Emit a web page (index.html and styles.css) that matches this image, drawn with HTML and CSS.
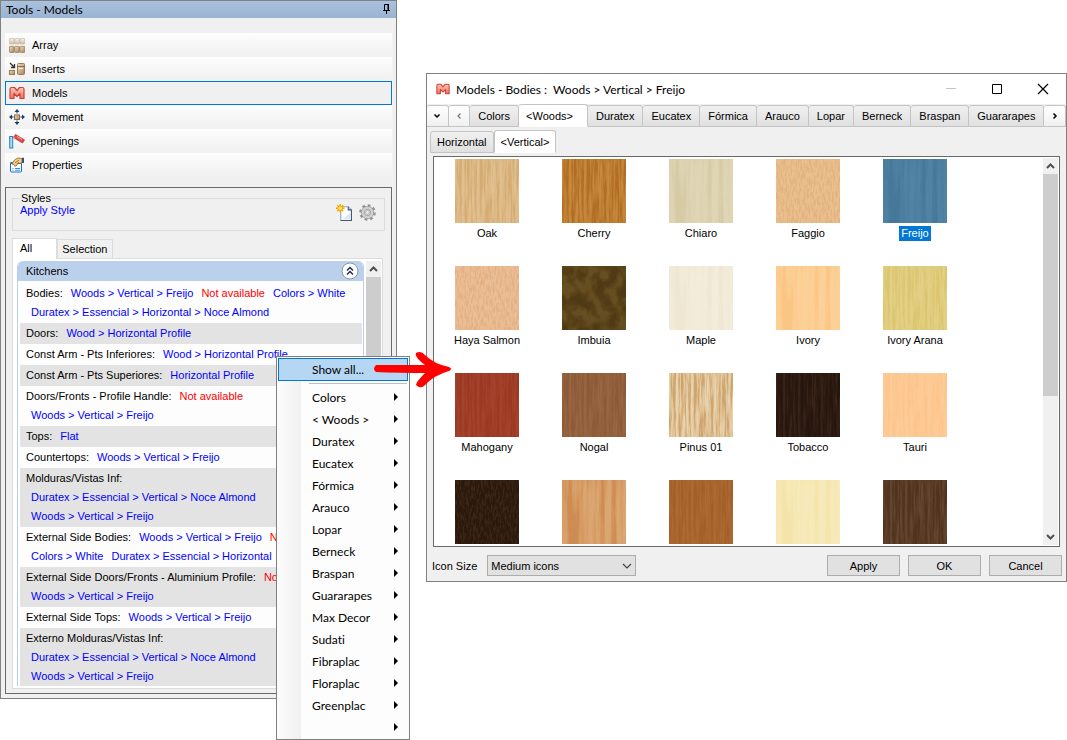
FILE: index.html
```html
<!DOCTYPE html>
<html lang="en">
<head>
    <meta charset="UTF-8">
    <meta name="viewport" content="width=device-width, initial-scale=1.0">
    <title>Tools - Models</title>
    <link rel="stylesheet" href="styles.css">
</head>
<body>
    <!-- Shared wood grain filters and icon symbols -->
    <svg class="defs" width="0" height="0" aria-hidden="true">
        <defs>
            <filter id="grain-fine" x="0" y="0" width="100%" height="100%" color-interpolation-filters="sRGB">
                <feTurbulence type="fractalNoise" baseFrequency="0.4 0.025" numOctaves="4" seed="4"/>
                <feColorMatrix values="3 0 0 0 -1  3 0 0 0 -1  3 0 0 0 -1  0 0 0 0 1"/>
            </filter>
            <filter id="grain-wide" x="0" y="0" width="100%" height="100%" color-interpolation-filters="sRGB">
                <feTurbulence type="fractalNoise" baseFrequency="0.18 0.01" numOctaves="5" seed="23"/>
                <feColorMatrix values="3 0 0 0 -1  3 0 0 0 -1  3 0 0 0 -1  0 0 0 0 1"/>
            </filter>
            <filter id="grain-speck" x="0" y="0" width="100%" height="100%" color-interpolation-filters="sRGB">
                <feTurbulence type="fractalNoise" baseFrequency="0.6 0.15" numOctaves="3" seed="7"/>
                <feColorMatrix values="3 0 0 0 -1  3 0 0 0 -1  3 0 0 0 -1  0 0 0 0 1"/>
            </filter>
            <filter id="grain-cloud" x="0" y="0" width="100%" height="100%" color-interpolation-filters="sRGB">
                <feTurbulence type="fractalNoise" baseFrequency="0.09 0.07" numOctaves="5" seed="2"/>
                <feColorMatrix values="3 0 0 0 -1  3 0 0 0 -1  3 0 0 0 -1  0 0 0 0 1"/>
            </filter>
            <linearGradient id="tan" x1="0" y1="0" x2="1" y2="1">
                <stop offset="0" stop-color="#f2e2c8"/>
                <stop offset="1" stop-color="#a98355"/>
            </linearGradient>
            <linearGradient id="red" x1="0" y1="0" x2="0" y2="1">
                <stop offset="0" stop-color="#ffc9b8"/>
                <stop offset="1" stop-color="#f0705f"/>
            </linearGradient>
            <linearGradient id="cream" x1="0" y1="0" x2="0" y2="1">
                <stop offset="0" stop-color="#faf3e8"/>
                <stop offset="1" stop-color="#c5b294"/>
            </linearGradient>
        </defs>
        <symbol id="logo-m" viewBox="0 0 16 16">
            <path d="M1 13.500V4Q1 2.500 2.500 2.500H5.500L8 5.500 10.500 2.500H13.500Q15 2.500 15 4V13.500H11V8.500L8 11.500 5 8.500V13.500Z" fill="url(#red)" stroke="#cb4038" stroke-width="1.200" stroke-linejoin="round"/>
        </symbol>
        <symbol id="chev-up" viewBox="0 0 15 16">
            <path d="M4 10L7.500 6.500 11 10" fill="none" stroke="#505050" stroke-width="2"/>
        </symbol>
        <symbol id="chev-down" viewBox="0 0 15 16">
            <path d="M4 6L7.500 9.500 11 6" fill="none" stroke="#505050" stroke-width="2"/>
        </symbol>
    </svg>

    <div class="desktop">
        <!-- Tools panel -->
        <section class="tools-window">
            <header class="tools-title">
                <h1>Tools - Models</h1>
                <button class="pin" aria-label="Pin">
                    <svg width="8" height="11" viewBox="0 0 8 11"><path d="M1.500 6V.5H5.500V6M0 6.500H7M3.500 7V10" fill="none" stroke="#000"/><path d="M4.500 0H6V6H4.500Z"/></svg>
                </button>
            </header>

            <nav class="tool-list">
                <a href="#array" class="tool">
                    <svg viewBox="0 0 16 16"><g fill="url(#cream)" stroke="#b8a487" stroke-width=".7" opacity=".8"><rect x=".4" y="1.400" width="4.700" height="5.600" rx=".6"/><rect x="5.700" y="1.400" width="4.700" height="5.600" rx=".6"/><rect x="11" y="1.400" width="4.700" height="5.600" rx=".6"/></g><g fill="url(#tan)" stroke="#8d7350" stroke-width=".7"><rect x=".4" y="9.400" width="4.700" height="6" rx=".6"/><rect x="5.700" y="9.400" width="4.700" height="6" rx=".6"/><rect x="11" y="9.400" width="4.700" height="6" rx=".6"/></g></svg>
                    Array
                </a>
                <a href="#inserts" class="tool">
                    <svg viewBox="0 0 16 16"><path d="M1 2L5 6M5.500 3V6.500H2" fill="none" stroke="#333" stroke-width="1.300"/><rect x=".5" y="9.500" width="5" height="4" fill="url(#tan)" stroke="#9b7b50"/><rect x="8.500" y="2.500" width="7" height="11" rx="1" fill="url(#tan)" stroke="#9b7b50"/><path d="M8.500 5.500H15.500" stroke="#8c6b42"/><path d="M10 7.500H14" stroke="#fff"/></svg>
                    Inserts
                </a>
                <a href="#models" class="tool selected">
                    <svg viewBox="0 0 16 16"><use href="#logo-m"/></svg>
                    Models
                </a>
                <a href="#movement" class="tool">
                    <svg viewBox="0 0 16 16"><g fill="#173f72"><path d="M8 0L10.500 3H8.500V4.500H7.500V3H5.500ZM8 16L10.500 13H8.500V11.500H7.500V13H5.500ZM0 8L3 5.500V7.500H4.500V8.500H3V10.500ZM16 8L13 5.500V7.500H11.500V8.500H13V10.500Z"/></g><rect x="5.500" y="6" width="5" height="4.500" fill="url(#tan)" stroke="#8c6b42"/></svg>
                    Movement
                </a>
                <a href="#openings" class="tool">
                    <svg viewBox="0 0 16 16"><rect x=".7" y="3.500" width="3" height="11.500" fill="#a8dcf7" stroke="#2484b8"/><path d="M6.500 1.500L15.500 7 13.500 10 4.500 4.500Z" fill="#e8494a" stroke="#b01f28" stroke-width=".7"/><path d="M5.500 4L4 7M8 3.500L13 6.500" fill="none" stroke="#ffb0a8"/></svg>
                    Openings
                </a>
                <a href="#properties" class="tool">
                    <svg viewBox="0 0 16 16"><rect x="1.500" y="5.500" width="11" height="9.500" rx="1" fill="#fff" stroke="#1671ce"/><path d="M1.500 6H12.500" stroke="#1671ce" stroke-width="2"/><path d="M3.500 11.500H4.500M6 11.500H11M3.500 13.200H4.500M6 13.200H11" stroke="#3b8be0"/><path d="M3 7Q5 2 9 1L13 1.500V6L9 6.500 7 9Q5 10 5 7.500Z" fill="#f4cf8b" stroke="#8d6526" stroke-width=".8"/><path d="M6 6L10 3M7.500 7.500L10 5" stroke="#a77732"/><path d="M13 .8H15V6H13Z" fill="#35507e"/></svg>
                    Properties
                </a>
            </nav>

            <div class="panel">
                <fieldset class="styles-group">
                    <legend>Styles</legend>
                    <a href="#apply-style">Apply Style</a>
                    <div class="group-actions">
                        <button aria-label="New style">
                            <svg viewBox="0 0 16 16"><path d="M4.500 2.500H11.500L14.500 5.500V15.500H4.500Z" fill="#fff" stroke="#8fa3bd"/><path d="M11.500 2.500V5.500H14.500M14.500 5.500V15.500H4.500" fill="none" stroke="#3f5678"/><path d="M6 14.500H13.500V8Z" fill="#dce8f6"/><path d="M4 0V8M0 4H8M1.200 1.200L6.800 6.800M6.800 1.200L1.200 6.800" stroke="#f6a800" stroke-width="1.300"/><circle cx="4" cy="4" r="2.200" fill="#ffe94a" stroke="#f39a00" stroke-width=".8"/></svg>
                        </button>
                        <button aria-label="Style settings">
                            <svg viewBox="0 0 16 16"><circle cx="8" cy="8" r="6.600" fill="none" stroke="#939393" stroke-width="2.400" stroke-dasharray="2.600 2.584"/><circle cx="8" cy="8" r="4.300" fill="none" stroke="#8c8c8c" stroke-width="3.600"/><circle cx="8" cy="8" r="4.300" fill="none" stroke="#d0d0d0" stroke-width="2.600"/><circle cx="8" cy="8" r="1.800" fill="#f0f0f0" stroke="#999" stroke-width=".7"/></svg>
                        </button>
                    </div>
                </fieldset>

                <div class="style-tabs" role="tablist">
                    <button class="style-tab active" role="tab">All</button>
                    <button class="style-tab" role="tab">Selection</button>
                </div>

                <div class="style-page">
                    <div class="group">
                        <div class="group-header">
                            <h2>Kitchens</h2>
                            <button aria-label="Collapse Kitchens">
                                <svg viewBox="0 0 18 18"><circle cx="9" cy="9" r="8" fill="#fff" stroke="#8798b0"/><path d="M6 8.500L9 5.500 12 8.500M6 12.500L9 9.500 12 12.500" fill="none" stroke="#1d2c55" stroke-width="1.500"/></svg>
                            </button>
                        </div>
                        <ul class="rows">
                            <li><span>Bodies:</span><a href="#">Woods &gt; Vertical &gt; Freijo</a><a href="#" class="missing">Not available</a><a href="#">Colors &gt; White</a><a href="#">Duratex &gt; Essencial &gt; Horizontal &gt; Noce Almond</a></li>
                            <li><span>Doors:</span><a href="#">Wood &gt; Horizontal Profile</a></li>
                            <li><span>Const Arm - Pts Inferiores:</span><a href="#">Wood &gt; Horizontal Profile</a></li>
                            <li><span>Const Arm - Pts Superiores:</span><a href="#">Horizontal Profile</a></li>
                            <li><span>Doors/Fronts - Profile Handle:</span><a href="#" class="missing">Not available</a><a href="#">Woods &gt; Vertical &gt; Freijo</a></li>
                            <li><span>Tops:</span><a href="#">Flat</a></li>
                            <li><span>Countertops:</span><a href="#">Woods &gt; Vertical &gt; Freijo</a></li>
                            <li><span>Molduras/Vistas Inf:</span><a href="#">Duratex &gt; Essencial &gt; Vertical &gt; Noce Almond</a><a href="#">Woods &gt; Vertical &gt; Freijo</a></li>
                            <li><span>External Side Bodies:</span><a href="#">Woods &gt; Vertical &gt; Freijo</a><a href="#" class="missing">Not available</a><a href="#">Colors &gt; White</a><a href="#">Duratex &gt; Essencial &gt; Horizontal</a></li>
                            <li><span>External Side Doors/Fronts - Aluminium Profile:</span><a href="#" class="missing">Not available</a><a href="#">Woods &gt; Vertical &gt; Freijo</a></li>
                            <li><span>External Side Tops:</span><a href="#">Woods &gt; Vertical &gt; Freijo</a></li>
                            <li><span>Externo Molduras/Vistas Inf:</span><a href="#">Duratex &gt; Essencial &gt; Vertical &gt; Noce Almond</a><a href="#">Woods &gt; Vertical &gt; Freijo</a></li>
                        </ul>
                    </div>
                    <div class="scrollbar">
                        <button aria-label="Scroll up"><svg viewBox="0 0 15 16"><use href="#chev-up"/></svg></button>
                        <div class="thumb"></div>
                        <button aria-label="Scroll down"><svg viewBox="0 0 15 16"><use href="#chev-down"/></svg></button>
                    </div>
                </div>
            </div>
        </section>

        <!-- Models dialog -->
        <section class="dialog">
            <header class="dialog-title">
                <svg class="dialog-logo" viewBox="0 0 16 16"><use href="#logo-m"/></svg>
                <h2>Models - Bodies :&nbsp; Woods &gt; Vertical &gt; Freijo</h2>
                <div class="window-buttons">
                    <button aria-label="Minimize" disabled><svg viewBox="0 0 12 12"><path d="M1 5.500H11" stroke="#c4c4c4"/></svg></button>
                    <button aria-label="Maximize"><svg viewBox="0 0 12 12"><path d="M1.500 1.500H10.500V10.500H1.500Z" fill="none" stroke="#000"/></svg></button>
                    <button aria-label="Close"><svg viewBox="0 0 12 12"><path d="M1 1L11 11M11 1L1 11" stroke="#000" stroke-width="1.200"/></svg></button>
                </div>
            </header>

            <div class="tabs" role="tablist">
                <button class="tab arrow" aria-label="Tab list"><svg viewBox="0 0 8 8"><path d="M1.500 2.500L4 5 6.500 2.500" fill="none" stroke="#000" stroke-width="1.500"/></svg></button>
                <button class="tab arrow" aria-label="Previous tabs"><svg viewBox="0 0 8 8"><path d="M5.500 1.500L3 4 5.500 6.500" fill="none" stroke="#777" stroke-width="1.200"/></svg></button>
                <button class="tab" role="tab">Colors</button>
                <button class="tab active" role="tab">&lt;Woods&gt;</button>
                <button class="tab" role="tab">Duratex</button>
                <button class="tab" role="tab">Eucatex</button>
                <button class="tab" role="tab">Fórmica</button>
                <button class="tab" role="tab">Arauco</button>
                <button class="tab" role="tab">Lopar</button>
                <button class="tab" role="tab">Berneck</button>
                <button class="tab" role="tab">Braspan</button>
                <button class="tab" role="tab">Guararapes</button>
                <button class="tab arrow" aria-label="Next tabs"><svg viewBox="0 0 8 8"><path d="M2.500 1.500L5 4 2.500 6.500" fill="none" stroke="#000" stroke-width="1.500"/></svg></button>
            </div>
            <div class="tabs sub-tabs" role="tablist">
                <button class="tab" role="tab">Horizontal</button>
                <button class="tab active" role="tab">&lt;Vertical&gt;</button>
            </div>

            <div class="browser">
                <ul class="swatches">
                    <li><svg class="swatch oak"><rect width="64" height="64" filter="url(#grain-fine)"/></svg><span>Oak</span></li>
                    <li><svg class="swatch cherry"><rect width="64" height="64" filter="url(#grain-fine)"/></svg><span>Cherry</span></li>
                    <li><svg class="swatch chiaro"><rect width="64" height="64" filter="url(#grain-wide)"/></svg><span>Chiaro</span></li>
                    <li><svg class="swatch faggio"><rect width="64" height="64" filter="url(#grain-speck)"/></svg><span>Faggio</span></li>
                    <li class="selected"><svg class="swatch freijo"><rect width="64" height="64" filter="url(#grain-wide)"/></svg><span>Freijo</span></li>
                    <li><svg class="swatch haya"><rect width="64" height="64" filter="url(#grain-speck)"/></svg><span>Haya Salmon</span></li>
                    <li><svg class="swatch imbuia"><rect width="64" height="64" filter="url(#grain-cloud)"/></svg><span>Imbuia</span></li>
                    <li><svg class="swatch maple"><rect width="64" height="64" filter="url(#grain-wide)"/></svg><span>Maple</span></li>
                    <li><svg class="swatch ivory"><rect width="64" height="64" filter="url(#grain-wide)"/></svg><span>Ivory</span></li>
                    <li><svg class="swatch arana"><rect width="64" height="64" filter="url(#grain-fine)"/></svg><span>Ivory Arana</span></li>
                    <li><svg class="swatch mahogany"><rect width="64" height="64" filter="url(#grain-fine)"/></svg><span>Mahogany</span></li>
                    <li><svg class="swatch nogal"><rect width="64" height="64" filter="url(#grain-fine)"/></svg><span>Nogal</span></li>
                    <li><svg class="swatch pinus"><rect width="64" height="64" filter="url(#grain-fine)"/></svg><span>Pinus 01</span></li>
                    <li><svg class="swatch tobacco"><rect width="64" height="64" filter="url(#grain-fine)"/></svg><span>Tobacco</span></li>
                    <li><svg class="swatch tauri"><rect width="64" height="64" filter="url(#grain-fine)"/></svg><span>Tauri</span></li>
                    <li><svg class="swatch wenge"><rect width="64" height="64" filter="url(#grain-speck)"/></svg></li>
                    <li><svg class="swatch alder"><rect width="64" height="64" filter="url(#grain-wide)"/></svg></li>
                    <li><svg class="swatch teak"><rect width="64" height="64" filter="url(#grain-fine)"/></svg></li>
                    <li><svg class="swatch birch"><rect width="64" height="64" filter="url(#grain-wide)"/></svg></li>
                    <li><svg class="swatch walnut"><rect width="64" height="64" filter="url(#grain-fine)"/></svg></li>
                </ul>
                <div class="scrollbar">
                    <button aria-label="Scroll up"><svg viewBox="0 0 15 16"><use href="#chev-up"/></svg></button>
                    <div class="thumb"></div>
                    <button aria-label="Scroll down"><svg viewBox="0 0 15 16"><use href="#chev-down"/></svg></button>
                </div>
            </div>

            <footer class="dialog-footer">
                <label for="iconSize">Icon Size</label>
                <div class="select-box">
                    <select id="iconSize">
                        <option>Medium icons</option>
                    </select>
                    <svg viewBox="0 0 10 6"><path d="M1 1L5 5 9 1" fill="none" stroke="#444" stroke-width="1.200"/></svg>
                </div>
                <div class="dialog-buttons">
                    <button>Apply</button>
                    <button>OK</button>
                    <button>Cancel</button>
                </div>
            </footer>
        </section>

        <!-- Context menu -->
        <div class="menu" role="menu">
            <button class="highlight" role="menuitem">Show all...</button>
            <hr>
            <button class="more" role="menuitem">Colors</button>
            <button class="more" role="menuitem">&lt; Woods &gt;</button>
            <button class="more" role="menuitem">Duratex</button>
            <button class="more" role="menuitem">Eucatex</button>
            <button class="more" role="menuitem">Fórmica</button>
            <button class="more" role="menuitem">Arauco</button>
            <button class="more" role="menuitem">Lopar</button>
            <button class="more" role="menuitem">Berneck</button>
            <button class="more" role="menuitem">Braspan</button>
            <button class="more" role="menuitem">Guararapes</button>
            <button class="more" role="menuitem">Max Decor</button>
            <button class="more" role="menuitem">Sudati</button>
            <button class="more" role="menuitem">Fibraplac</button>
            <button class="more" role="menuitem">Floraplac</button>
            <button class="more" role="menuitem">Greenplac</button>
            <button class="more" role="menuitem"></button>
        </div>

        <svg class="pointer" viewBox="0 0 80 38" aria-hidden="true">
            <path d="M4 14Q24 14 60 14V22Q24 22 4 21Q0 18 4 14Z" fill="#f00"/>
            <path d="M44 2Q49 -1 53 4Q62 13 77 16Q81 18 77 20Q62 24 52 35Q48 38 44 34Q44 31 53 22V14Q42 6 44 2Z" fill="#f00"/>
        </svg>
    </div>
</body>
</html>
```
FILE: styles.css
```css
* {
    margin: 0;
    padding: 0;
    box-sizing: border-box;
}

body {
    font-family: 'Liberation Sans', Arial, sans-serif;
    font-size: 11px;
    font-variant-ligatures: none;
    color: #000;
    background: #fff;
}

button {
    font: inherit;
    font-variant-ligatures: none;
    color: inherit;
    background: none;
    border: none;
}

a {
    color: #00f;
    text-decoration: none;
}

ul {
    list-style: none;
}

svg {
    display: block;
}

.defs {
    position: absolute;
}

.desktop {
    position: relative;
    display: grid;
    grid-template-columns: 397px minmax(0, 1fr);
    align-items: start;
    gap: 29px;
    min-height: 100vh;
    overflow: hidden;
}

/* Tools panel */
.tools-window {
    background: #f0f0f0;
    border: 1px solid #808080;
    padding-bottom: 4px;
}

.tools-title {
    display: flex;
    align-items: center;
    justify-content: space-between;
    height: 17px;
    padding: 0 5px;
    background: linear-gradient(#aac1df, #99b4d1);
}

.tools-title h1 {
    font: 12px Lato, sans-serif;
}

.tool-list {
    margin: 15px 4px 10px;
}

.tool {
    display: flex;
    align-items: center;
    gap: 7px;
    height: 24px;
    padding: 0 4px;
    color: #000;
    background: linear-gradient(#fdfdfd, #f0f0f0);
}

.tool svg {
    width: 16px;
    height: 16px;
}

.tool.selected {
    padding: 0 3px;
    background: #f0f0f0;
    border: 1px solid #0078d7;
}

.panel {
    margin: 0 4px;
    padding: 4px 6px;
    border: 1px solid #696969;
}

.styles-group {
    display: flex;
    justify-content: space-between;
    align-items: flex-start;
    height: 39px;
    padding: 0 8px 0 7px;
    border: 1px solid #dcdcdc;
}

.styles-group legend {
    padding: 0 1px;
}

.group-actions {
    display: flex;
    gap: 6px;
}

.group-actions svg {
    width: 17px;
    height: 17px;
}

.style-tabs {
    display: flex;
    align-items: flex-end;
    margin-top: 7px;
}

.style-tab {
    height: 19px;
    padding: 0 4px;
    border: 1px solid #dcdcdc;
    border-bottom: none;
}

.style-tab.active {
    height: 21px;
    margin-bottom: -1px;
    padding: 0 24px 3px 7px;
    background: #fff;
    z-index: 1;
}

.style-page {
    display: flex;
    gap: 2px;
    height: 431px;
    margin-right: 2px;
    padding: 2px 1px 2px 4px;
    background: #fff;
    border: 1px solid #dcdcdc;
}

.group {
    flex: 1;
    overflow: hidden;
    background: #fff;
    border-top-left-radius: 6px;
    border-top-right-radius: 6px;
    border: solid #bbd0ea;
    border-width: 0 1px;
}

.group-header {
    display: flex;
    align-items: center;
    justify-content: space-between;
    height: 20px;
    padding: 0 4px 0 8px;
    background: #bbd0ea;
}

.group-header h2 {
    font-size: 11px;
    font-weight: normal;
}

.group-header svg {
    width: 18px;
    height: 18px;
}

.rows {
    padding: 2px 1px 0 2px;
}

.rows li {
    display: flex;
    flex-wrap: wrap;
    padding: 1px 6px;
    line-height: 19px;
    white-space: nowrap;
    background: #fdfdfd;
}

.rows li:nth-child(even) {
    background: #e3e3e3;
}

.rows span {
    margin-right: 3px;
}

.rows a {
    margin: 0 3px 0 5px;
}

.rows .missing {
    color: #f00;
}

.scrollbar {
    display: flex;
    flex-direction: column;
    width: 15px;
    background: #f0f0f0;
}

.scrollbar svg {
    width: 15px;
    height: 16px;
}

.scrollbar .thumb {
    height: 222px;
    margin-bottom: auto;
    background: #cdcdcd;
}

/* Models dialog */
.dialog {
    margin-top: 73px;
    background: #f0f0f0;
    border: 1px solid #808080;
}

.dialog-title {
    display: flex;
    align-items: center;
    height: 30px;
    padding: 0 17px 0 9px;
    background: #fff;
}

.dialog-logo {
    width: 14px;
    height: 14px;
    margin-right: 6px;
}

.dialog-title h2 {
    font: 12px Lato, sans-serif;
    font-variant-ligatures: none;
}

.window-buttons {
    display: flex;
    gap: 34px;
    margin-left: auto;
}

.window-buttons svg {
    width: 12px;
    height: 12px;
}

.tabs {
    display: flex;
    align-items: flex-end;
    height: 23px;
    white-space: nowrap;
}

.tab {
    height: 22px;
    padding: 0 8px;
    background: linear-gradient(#f0f0f0, #e0e0e0);
    border: 1px solid #c4c4c4;
    border-left-width: 0;
    border-radius: 3px 3px 0 0;
}

.tab.active {
    height: 23px;
    background: #fff;
    border-bottom-color: #fff;
}

.tabs:not(.sub-tabs) .tab.active {
    padding: 0 14px 0 7px;
}

.tab.arrow {
    flex: 1;
    display: flex;
    align-items: center;
    justify-content: center;
    padding: 0;
    background: linear-gradient(#fff, #f0f0f0);
}

.tab.arrow svg {
    width: 8px;
    height: 8px;
}

.sub-tabs {
    margin: 3px 3px 3px;
}

.sub-tabs .tab {
    padding: 0 6px;
    border-left-width: 1px;
}

.browser {
    display: flex;
    height: 391px;
    margin: 0 6px;
    padding: 1px;
    background: #fff;
    border: 1px solid #696969;
}

.swatches {
    flex: 1;
    display: grid;
    grid-template-columns: repeat(auto-fill, 107px);
    grid-auto-rows: 107px;
    overflow: hidden;
}

.swatches li {
    display: flex;
    flex-direction: column;
    align-items: center;
    gap: 3px;
    padding: 1px 3px 0 0;
}

.swatches span {
    padding: 0 2px;
    line-height: 15px;
}

.swatches .selected span {
    color: #fff;
    background: #0078d7;
}

.swatch {
    width: 64px;
    height: 64px;
    isolation: isolate;
}

.swatch rect {
    mix-blend-mode: soft-light;
    opacity: 0.18;
}

.oak { background: #dcb883; }
.cherry { background: #bd7d30; }
.chiaro { background: #dcd2b0; }
.faggio { background: #e7bb88; }
.freijo { background: #4b7e9f; }
.haya { background: #e8b98e; }
.imbuia { background: #5b4319; }
.maple { background: #f1ead7; }
.ivory { background: #fccd90; }
.arana { background: #e0cc7c; }
.mahogany { background: #a03d27; }
.nogal { background: #93603c; }
.pinus { background: #dfc193; }
.tobacco { background: #2c1a10; }
.tauri { background: #fdc993; }
.wenge { background: #301c0e; }
.alder { background: #d69b63; }
.teak { background: #a8652d; }
.birch { background: #f6e8b4; }
.walnut { background: #593b25; }

.mahogany rect,
.nogal rect,
.teak rect,
.tauri rect,
.freijo rect {
    opacity: 0.1;
}

.cherry rect,
.oak rect,
.alder rect {
    opacity: 0.25;
}

.pinus rect {
    opacity: 0.6;
}

.dialog-footer {
    display: flex;
    align-items: center;
    height: 34px;
    padding: 3px 4px 0 5px;
}

.select-box {
    position: relative;
    width: 149px;
    margin-left: 10px;
}

.select-box select {
    appearance: none;
    width: 100%;
    height: 21px;
    padding: 0 3px;
    font: inherit;
    color: #000;
    background: #e1e1e1;
    border: 1px solid #adadad;
    border-radius: 0;
}

.select-box svg {
    position: absolute;
    top: 8px;
    right: 4px;
    width: 10px;
    height: 6px;
    pointer-events: none;
}

.dialog-buttons {
    display: flex;
    gap: 8px;
    margin-left: auto;
}

.dialog-buttons button {
    width: 73px;
    height: 21px;
    background: #e1e1e1;
    border: 1px solid #adadad;
}

/* Context menu */
.menu {
    position: absolute;
    top: 356px;
    left: 276px;
    display: flex;
    flex-direction: column;
    width: 134px;
    padding: 1px;
    font: 12px Lato, sans-serif;
    background: linear-gradient(90deg, #fcfcfc, #f0f0f0 24px, #fdfdfd 24px);
    border: 1px solid #808080;
}

.menu button {
    display: flex;
    align-items: center;
    justify-content: space-between;
    height: 22px;
    padding: 0 10px 0 34px;
}

.menu .highlight {
    height: 23px;
    padding: 0 9px 0 33px;
    background: #b5d7f3;
    border: 1px solid #0078d7;
}

.menu hr {
    margin: 2px 1px 2px 31px;
    border: none;
    border-top: 1px solid #bdbdbd;
}

.menu .more::after {
    content: '';
    margin-left: auto;
    border: 4px solid transparent;
    border-left-color: #000;
    border-right-width: 0;
}

.pointer {
    position: absolute;
    top: 351px;
    left: 372px;
    width: 80px;
    height: 38px;
}
```
